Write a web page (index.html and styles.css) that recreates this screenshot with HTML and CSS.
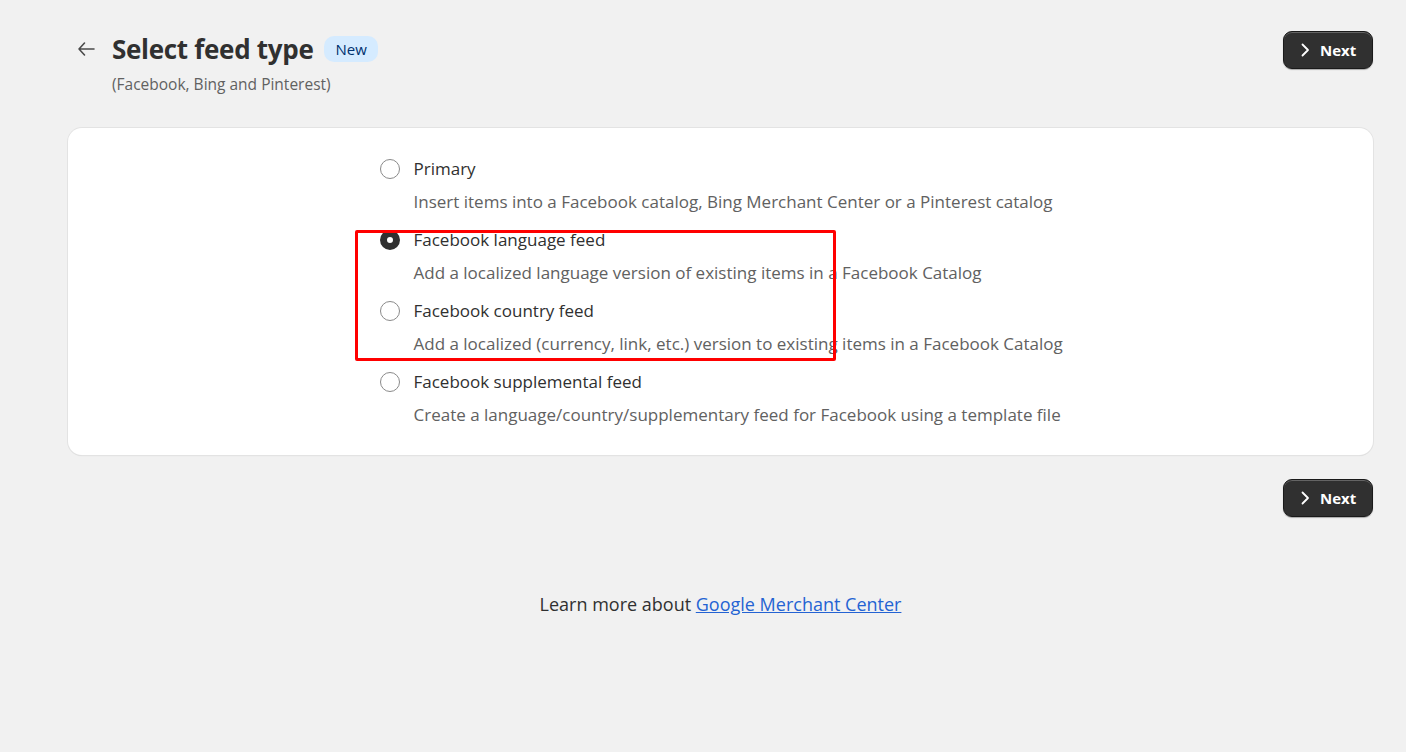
FILE: index.html
```html
<!DOCTYPE html>
<html lang="en">
<head>
  <meta charset="UTF-8" />
  <title>Select feed type</title>
  <link rel="stylesheet" href="styles.css">
</head>
<body>
  <div class="page">
    <div class="header">
      <div class="title-block">
        <div class="title-row">
          <button class="back" aria-label="Back">
            <svg width="20" height="20" viewBox="0 0 20 20"><path d="M18 10H3M8.5 4L3 10 8.5 16" fill="none" stroke="#4a4a4a" stroke-width="1.6" stroke-linecap="round" stroke-linejoin="round"/></svg>
          </button>
          <h1>Select feed type</h1>
          <span class="badge">New</span>
        </div>
        <div class="subtitle">(Facebook, Bing and Pinterest)</div>
      </div>
      <button class="next">
        <svg width="16" height="16" viewBox="0 0 16 16"><path d="M5.5 2.5L11 8 5.5 13.5" fill="none" stroke="#fff" stroke-width="1.8" stroke-linecap="round" stroke-linejoin="round"/></svg>
        Next
      </button>
    </div>

    <div class="card">
      <div class="options">
        <label class="option">
          <span class="radio"></span>
          <span class="label">Primary</span>
          <span class="desc">Insert items into a Facebook catalog, Bing Merchant Center or a Pinterest catalog</span>
        </label>
        <label class="option">
          <span class="radio checked"></span>
          <span class="label">Facebook language feed</span>
          <span class="desc">Add a localized language version of existing items in a Facebook Catalog</span>
        </label>
        <label class="option">
          <span class="radio"></span>
          <span class="label">Facebook country feed</span>
          <span class="desc">Add a localized (currency, link, etc.) version to existing items in a Facebook Catalog</span>
        </label>
        <label class="option">
          <span class="radio"></span>
          <span class="label">Facebook supplemental feed</span>
          <span class="desc">Create a language/country/supplementary feed for Facebook using a template file</span>
        </label>
        <div class="highlight"></div>
      </div>
    </div>

    <div class="actions">
      <button class="next">
        <svg width="16" height="16" viewBox="0 0 16 16"><path d="M5.5 2.5L11 8 5.5 13.5" fill="none" stroke="#fff" stroke-width="1.8" stroke-linecap="round" stroke-linejoin="round"/></svg>
        Next
      </button>
    </div>

    <p class="footer">Learn more about <a href="#">Google Merchant Center</a></p>
  </div>
</body>
</html>
```

FILE: styles.css
```css
body {
  margin: 0;
  background: #f1f1f1;
  font-family: 'Open Sans', 'Noto Sans', sans-serif;
  color: #303030;
}

.page {
  padding: 31px 33px 0 68px;
}

.header {
  display: flex;
  justify-content: space-between;
  align-items: flex-start;
  margin-bottom: 33px;
}

.title-row {
  display: flex;
  align-items: center;
  margin-left: 8px;
}

.back {
  background: none;
  border: none;
  padding: 0;
  width: 26px;
  height: 26px;
  display: flex;
  align-items: center;
  cursor: pointer;
  margin-right: 10px;
}

h1 {
  margin: 0;
  font-size: 26px;
  font-weight: 700;
  color: #303030;
  letter-spacing: -0.3px;
}

.badge {
  margin-left: 11px;
  background: #d5ebff;
  color: #00316e;
  font-size: 15px;
  line-height: 20px;
  padding: 3px 11px;
  border-radius: 10px;
}

.subtitle {
  margin: 6px 0 0 44px;
  font-size: 15.5px;
  color: #616161;
}

.next {
  display: flex;
  align-items: center;
  gap: 7px;
  height: 38px;
  width: 90px;
  padding: 0 0 0 13px;
  background: #303030;
  color: #fff;
  border: 1px solid #1a1a1a;
  border-radius: 9px;
  box-shadow: inset 0 1px 0 rgba(255,255,255,0.25), 0 1px 1px rgba(0,0,0,0.3);
  font-family: inherit;
  font-size: 15px;
  font-weight: 700;
  cursor: pointer;
}

.card {
  background: #fff;
  border-radius: 14px;
  box-shadow: 0 0 0 1px #e3e3e3, 0 1px 1px rgba(0,0,0,0.12);
  padding: 29px 0 28px;
}

.options {
  position: relative;
  width: 682px;
  margin: 0 auto;
}

.option {
  display: grid;
  grid-template-columns: 34px 1fr;
  row-gap: 9px;
  margin-bottom: 14px;
  white-space: nowrap;
}

.option:last-of-type {
  margin-bottom: 0;
}

.radio {
  width: 20px;
  height: 20px;
  box-sizing: border-box;
  border: 1px solid #8a8a8a;
  border-radius: 50%;
  align-self: center;
}

.radio.checked {
  border: 7px solid #303030;
}

.label {
  font-size: 17px;
  line-height: 24px;
}

.desc {
  grid-column: 2;
  font-size: 17px;
  line-height: 24px;
  color: #616161;
}

/* red outline around the two localized feed options */
.highlight {
  position: absolute;
  left: -25px;
  top: 73px;
  width: 475px;
  height: 125px;
  border: 3px solid #ff0000;
  border-radius: 2px;
}

.actions {
  display: flex;
  justify-content: flex-end;
  margin-top: 24px;
}

.footer {
  text-align: center;
  margin-top: 75px;
  font-size: 18px;
  color: #303030;
}

.footer a {
  color: #2463d3;
}
```
